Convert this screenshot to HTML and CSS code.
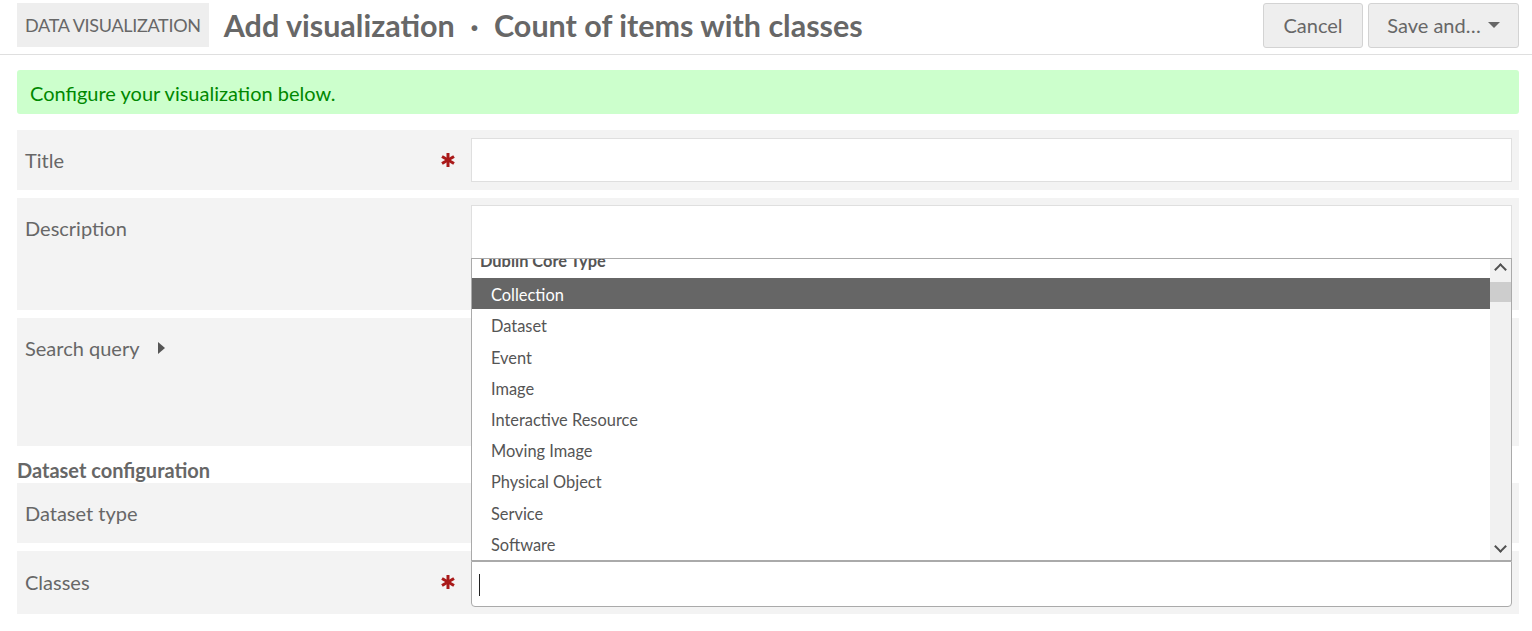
FILE: index.html
```html
<!DOCTYPE html>
<html>
<head>
<meta charset="utf-8">
<link rel="stylesheet" href="styles.css">
</head>
<body>
<header class="topbar">
  <div class="section-tag">DATA VISUALIZATION</div>
  <h1 class="page-title">Add visualization <span class="sep">·</span> Count of items with classes</h1>
  <div class="actions">
    <button class="btn btn-cancel">Cancel</button>
    <button class="btn btn-save">Save and… <span class="caret-down"></span></button>
  </div>
</header>
<main class="content">
  <div class="alert">Configure your visualization below.</div>

  <div class="field field-title">
    <div class="label">Title
      <svg class="req" viewBox="0 0 16 16" width="16" height="16"><g stroke="#a91919" stroke-width="3" stroke-linecap="butt"><line x1="8" y1="1" x2="8" y2="15"/><line x1="2" y1="4.5" x2="14" y2="11.5"/><line x1="2" y1="11.5" x2="14" y2="4.5"/></g></svg>
    </div>
    <div class="input-wrap"><div class="text-input"></div></div>
  </div>

  <div class="field field-desc">
    <div class="label">Description</div>
    <div class="input-wrap"><div class="textarea"></div></div>
  </div>

  <div class="field field-query">
    <div class="label">Search query <span class="caret-right"></span></div>
    <div class="input-wrap"></div>
  </div>

  <h3 class="group-heading">Dataset configuration</h3>

  <div class="field field-type">
    <div class="label">Dataset type</div>
    <div class="input-wrap"></div>
  </div>

  <div class="field field-classes">
    <div class="label">Classes
      <svg class="req" viewBox="0 0 16 16" width="16" height="16"><g stroke="#a91919" stroke-width="3" stroke-linecap="butt"><line x1="8" y1="1" x2="8" y2="15"/><line x1="2" y1="4.5" x2="14" y2="11.5"/><line x1="2" y1="11.5" x2="14" y2="4.5"/></g></svg>
    </div>
    <div class="input-wrap">
      <div class="chosen-drop">
        <ul class="results">
          <li class="optgroup">Dublin Core Type</li>
          <li class="option active">Collection</li>
          <li class="option">Dataset</li>
          <li class="option">Event</li>
          <li class="option">Image</li>
          <li class="option">Interactive Resource</li>
          <li class="option">Moving Image</li>
          <li class="option">Physical Object</li>
          <li class="option">Service</li>
          <li class="option">Software</li>
          <li class="option">Sound</li>
        </ul>
        <div class="scrollbar">
          <span class="sb-up"></span>
          <span class="sb-thumb"></span>
          <span class="sb-down"></span>
        </div>
      </div>
      <div class="search-input"><span class="cursor"></span></div>
    </div>
  </div>
</main>
</body>
</html>
```

FILE: styles.css
```css
* { box-sizing: border-box; }
html, body { margin: 0; padding: 0; background: #fff; }
body {
  font-family: Lato, "Open Sans", sans-serif;
  color: #676767;
}
.topbar {
  display: flex;
  align-items: center;
  padding: 3px 13px 7px 17px;
  border-bottom: 1px solid #dfdfdf;
  height: 55px;
}
.section-tag {
  background: #eee;
  height: 44px;
  display: flex;
  align-items: center;
  padding: 0 8px;
  font-size: 18px;
  letter-spacing: -0.3px;
  white-space: nowrap;
}
.page-title {
  margin: 0 0 0 15px;
  font-size: 30.5px;
  font-weight: 700;
  flex: 1;
  white-space: nowrap;
}
.sep { margin: 0 8px 0 8px; }
.actions { display: flex; gap: 5px; }
.btn {
  font-family: inherit;
  font-size: 20px;
  color: #676767;
  background: #eee;
  border: 1px solid #d3d3d3;
  border-radius: 3px;
  height: 45px;
  padding: 0;
  display: flex;
  align-items: center;
  justify-content: center;
  white-space: nowrap;
}
.btn-cancel { width: 100px; }
.btn-save { width: 151px; }
.caret-down {
  display: inline-block;
  width: 0; height: 0;
  border-left: 6px solid transparent;
  border-right: 6px solid transparent;
  border-top: 6px solid #676767;
  margin-left: 7px;
}
.content {
  padding: 15px 13px 0 17px;
}
.alert {
  background: #cfc;
  color: #080;
  border-radius: 3px;
  height: 44px;
  display: flex;
  align-items: center;
  padding: 1px 13px 0;
  font-size: 20px;
  margin-bottom: 16px;
}
.field {
  display: flex;
  background: #f3f3f3;
  padding: 8px 7px 8px 8px;
  margin-bottom: 8px;
}
.label {
  width: 446px;
  flex: none;
  font-size: 20px;
  line-height: 24px;
  padding-top: 10px;
  display: flex;
  align-items: flex-start;
}
.req {
  margin-left: auto;
  margin-right: 15px;
  margin-top: 4px;
  flex: none;
}
.caret-right {
  display: inline-block;
  width: 0; height: 0;
  border-top: 6px solid transparent;
  border-bottom: 6px solid transparent;
  border-left: 7px solid #555;
  margin: 6px 0 0 18px;
}
.input-wrap { flex: 1; position: relative; }
.text-input {
  height: 44px;
  background: #fff;
  border: 1px solid #dfdfdf;
}
.field-title { height: 60px; }
.field-desc { height: 112px; padding-top: 7px; }
.field-desc .label { padding-top: 11px; }
.textarea {
  height: 105px;
  background: #fff;
  border: 1px solid #dfdfdf;
}
.field-query { height: 128px; }
.group-heading {
  margin: 0;
  font-size: 20px;
  font-weight: 700;
  padding: 4px 0 1px;
  line-height: 24px;
}
.field-type { height: 60px; }
.field-classes { height: 63px; padding-top: 10px; margin-bottom: 0; }
.field-classes .label { padding-top: 9px; }
.search-input {
  height: 46px;
  background: #fff;
  border: 1px solid #aaa;
  border-radius: 0 0 4px 4px;
  padding: 12px 7px;
}
.cursor {
  display: block;
  width: 1px;
  height: 22px;
  background: #222;
}
.chosen-drop {
  position: absolute;
  left: 0; right: 0;
  bottom: 45px;
  height: 303px;
  background: #fff;
  border: 1px solid #aaa;
  overflow: hidden;
  display: flex;
}
.results {
  list-style: none;
  margin: -12px 0 0 0;
  padding: 0;
  flex: 1;
}
.results li {
  height: 31.2px;
  line-height: 33px;
  font-size: 16.4px;
  white-space: nowrap;
}
.results li.optgroup {
  font-weight: 700;
  padding-left: 8px;
  color: #555;
  line-height: 28px;
}
.option { padding-left: 19px; color: #555; }
.option.active { background: #666; color: #fff; }
.scrollbar {
  width: 21px;
  flex: none;
  background: #f1f1f1;
  position: relative;
}
.sb-thumb {
  position: absolute;
  left: 0; right: 0;
  top: 23px;
  height: 20px;
  background: #cdcdcd;
}
.sb-up, .sb-down {
  position: absolute;
  left: 6px;
  width: 9px;
  height: 9px;
  border-left: 2.5px solid #505050;
  border-top: 2.5px solid #505050;
}
.sb-up { top: 6px; transform: rotate(45deg); }
.sb-down { bottom: 9px; transform: rotate(225deg); }
```
